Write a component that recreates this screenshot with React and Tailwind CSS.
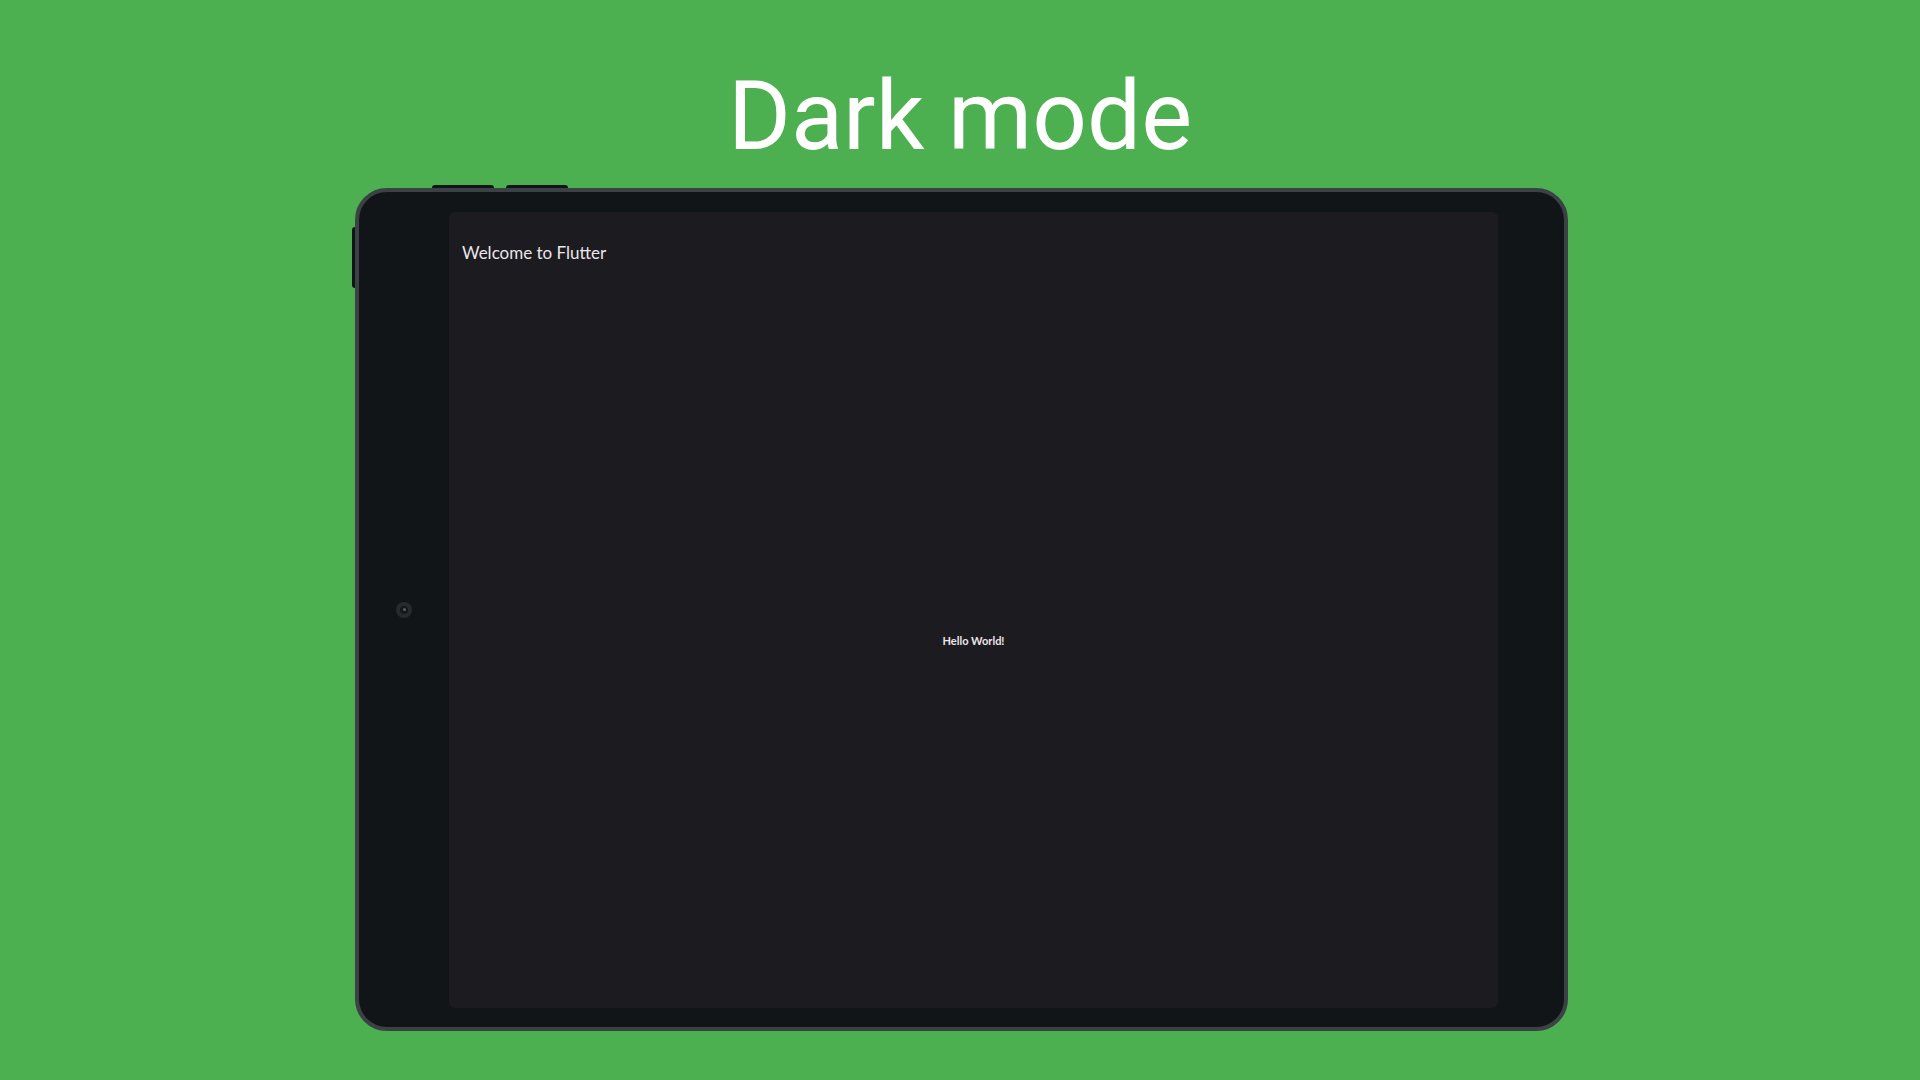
import React from "react";

const Camera = () => (
  <div className="w-4 h-4 rounded-full bg-[#272b2e] flex items-center justify-center">
    <div className="w-2 h-2 rounded-full bg-[#15181a] flex items-center justify-center">
      <div className="w-[3px] h-[3px] rounded-full bg-[#5a5f63]"></div>
    </div>
  </div>
);

const App = () => {
  return (
    <div className="min-h-screen w-full bg-[#4caf50] flex flex-col items-center pt-[68px]">
      {/* Title */}
      <h1 className="h-[96px] text-[96px] leading-none text-white font-['Roboto',sans-serif]">
        Dark mode
      </h1>

      {/* Tablet */}
      <div className="mt-[21px] ml-[3px] flex flex-col">
        {/* Top buttons */}
        <div className="flex gap-[12px] pl-[77px] h-[3px]">
          <div className="w-[62px] h-[3px] bg-[#121517] rounded-t-sm"></div>
          <div className="w-[62px] h-[3px] bg-[#121517] rounded-t-sm"></div>
        </div>

        <div className="relative w-[1213px] h-[843px] rounded-[32px] border-4 border-[#3c4145] bg-[#121517] flex">
          {/* Side button */}
          <div className="absolute -left-[7px] top-[35px] w-[3px] h-[61px] bg-[#121517] rounded-l-sm"></div>

          {/* Left bezel */}
          <div className="w-[90px] flex items-center justify-center">
            <Camera />
          </div>

          {/* Screen */}
          <div className="mt-[20px] mb-[19px] w-[1049px] rounded-md bg-[#1c1b1f] flex flex-col font-['Lato',sans-serif] text-[#ebe6ea]">
            <div className="h-[62px] pl-[13px] pt-[32px] text-[17px] leading-none">
              Welcome to Flutter
            </div>
            <div className="flex-1 flex items-center justify-center text-[11px] font-bold">
              Hello World!
            </div>
          </div>
        </div>
      </div>
    </div>
  );
};

export default App;
